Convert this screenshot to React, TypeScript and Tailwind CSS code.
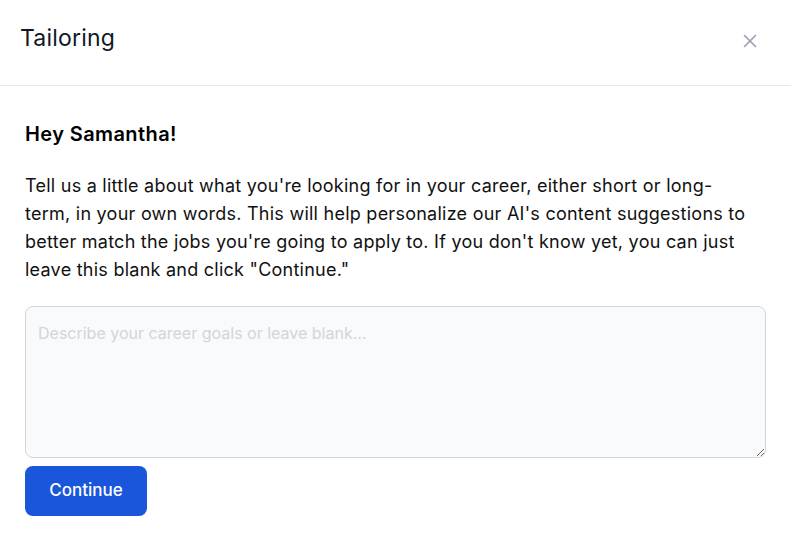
import { X } from 'lucide-react';

export default function App() {
  return (
    <div className="w-[791px] h-[553px] bg-white text-gray-900 font-['Inter','Liberation_Sans',sans-serif]">
      <header className="h-[86px] border-b border-gray-200 pl-5 pr-[30px] flex items-center justify-between">
        <h1 className="text-[23px] tracking-[0.2px] text-gray-900 -mt-2">Tailoring</h1>
        <button className="text-gray-400 -mt-1" aria-label="Close">
          <X size={22} strokeWidth={1.75} />
        </button>
      </header>
      <main className="px-[25px] pt-[34px]">
        <h2 className="text-[20px] tracking-[0.4px] font-semibold text-black leading-7">Hey Samantha!</h2>
        <p className="mt-[24px] text-[18px] tracking-[0.25px] leading-[28px] text-[#111] whitespace-nowrap">
          Tell us a little about what you're looking for in your career, either short or long-
          <br />
          term, in your own words. This will help personalize our AI's content suggestions to
          <br />
          better match the jobs you're going to apply to. If you don't know yet, you can just
          <br />
          leave this blank and click "Continue."
        </p>
        <textarea
          className="mt-[22px] block w-full h-[152px] rounded-lg border border-gray-300 bg-gray-50 px-3 py-[14px] text-base placeholder:text-gray-300 outline-none"
          placeholder="Describe your career goals or leave blank..."
        />
        <button className="mt-2 h-[50px] w-[122px] rounded-lg bg-[#1a56db] text-white text-[17px] font-medium">
          Continue
        </button>
      </main>
    </div>
  );
}
